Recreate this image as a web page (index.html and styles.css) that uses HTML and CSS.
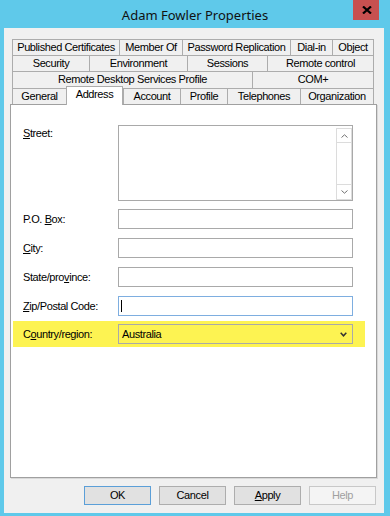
FILE: index.html
```html
<!DOCTYPE html>
<html>
<head>
<meta charset="utf-8">
<title>Adam Fowler Properties</title>
<link rel="stylesheet" href="styles.css">
</head>
<body>
<div class="window">
  <div class="titlebar">
    <div class="title">Adam Fowler Properties</div>
    <div class="close">
      <svg width="10" height="8" viewBox="0 0 10 8"><path d="M1 0.5 L9 7.5 M9 0.5 L1 7.5" stroke="#000" stroke-width="2.2" fill="none"/></svg>
    </div>
  </div>
  <div class="client">
    <div class="tabs">
      <div class="tabrow r1">
        <div class="tab">Published Certificates</div>
        <div class="tab">Member Of</div>
        <div class="tab">Password Replication</div>
        <div class="tab">Dial-in</div>
        <div class="tab">Object</div>
      </div>
      <div class="tabrow r2">
        <div class="tab">Security</div>
        <div class="tab">Environment</div>
        <div class="tab">Sessions</div>
        <div class="tab">Remote control</div>
      </div>
      <div class="tabrow r3">
        <div class="tab">Remote Desktop Services Profile</div>
        <div class="tab">COM+</div>
      </div>
      <div class="tabrow r4">
        <div class="tab">General</div>
        <div class="tab sel">Address</div>
        <div class="tab">Account</div>
        <div class="tab">Profile</div>
        <div class="tab">Telephones</div>
        <div class="tab">Organization</div>
      </div>
    </div>
    <div class="panel">
      <div class="field street">
        <label><u>S</u>treet:</label>
        <div class="textarea">
          <div class="vscroll">
            <div class="sb-btn up"><svg width="7" height="4" viewBox="0 0 7 4"><path d="M0.5 3.5 L3.5 0.8 L6.5 3.5" stroke="#707070" fill="none"/></svg></div>
            <div class="sb-btn down"><svg width="7" height="4" viewBox="0 0 7 4"><path d="M0.5 0.5 L3.5 3.2 L6.5 0.5" stroke="#707070" fill="none"/></svg></div>
          </div>
        </div>
      </div>
      <div class="field">
        <label>P.O. <u>B</u>ox:</label>
        <div class="input"></div>
      </div>
      <div class="field">
        <label><u>C</u>ity:</label>
        <div class="input"></div>
      </div>
      <div class="field">
        <label>State/pro<u>v</u>ince:</label>
        <div class="input"></div>
      </div>
      <div class="field">
        <label><u>Z</u>ip/Postal Code:</label>
        <div class="input focus"><div class="caret"></div></div>
      </div>
      <div class="field highlight">
        <label>C<u>o</u>untry/region:</label>
        <div class="combo">
          <span>Australia</span>
          <svg width="7" height="5" viewBox="0 0 7 5"><path d="M0.7 0.8 L3.5 3.8 L6.3 0.8" stroke="#333" stroke-width="1.5" fill="none"/></svg>
        </div>
      </div>
    </div>
    <div class="buttons">
      <button class="btn default">OK</button>
      <button class="btn">Cancel</button>
      <button class="btn"><u>A</u>pply</button>
      <button class="btn disabled">Help</button>
    </div>
  </div>
</div>
</body>
</html>
```
FILE: styles.css
```css
* { box-sizing: border-box; }
html, body { margin: 0; padding: 0; }
body {
  width: 390px;
  height: 516px;
  overflow: hidden;
  font-family: "Liberation Sans", Arial, sans-serif;
  font-size: 11px;
  letter-spacing: -0.4px;
  color: #000;
}
.window {
  width: 390px;
  height: 516px;
  background: #5fc9ea;
  display: flex;
  flex-direction: column;
}
.titlebar {
  height: 28px;
  flex: none;
  display: grid;
  grid-template-columns: 1fr auto 1fr;
  align-items: start;
}
.title {
  grid-column: 2;
  font-family: "Noto Sans", sans-serif;
  font-size: 13px;
  letter-spacing: 0;
  line-height: 18px;
  padding-top: 6px;
  color: #111;
}
.close {
  grid-column: 3;
  justify-self: end;
  margin-right: 11px;
  width: 26px;
  height: 20px;
  background: #c75050;
  display: flex;
  align-items: center;
  justify-content: center;
  padding-left: 2px;
}
.client {
  margin: 0 6px 0 4px;
  height: 485px;
  background: #f0f0f0;
  padding: 11px 0 0 6px;
}
.tabs {
  margin-left: 2px;
  width: 362px;
}
.tabrow {
  display: grid;
  height: 16px;
}
.tabrow.r1 { grid-template-columns: 107px 63px 108px 42px 42px; }
.tabrow.r2 { grid-template-columns: 77px 98px 80px 107px; }
.tabrow.r3 { grid-template-columns: 240px 122px; height: 17px; }
.tabrow.r4 { grid-template-columns: 54px 57px 57px 47px 73px 74px; }
.tab {
  border: 1px solid #acacac;
  border-bottom: 0;
  border-right: 0;
  background: #f0f0f0;
  text-align: center;
  line-height: 14px;
  white-space: nowrap;
}
.tabrow.r3 .tab { line-height: 15px; }
.tab:last-child { border-right: 1px solid #acacac; }
.tab.sel {
  background: #fff;
  position: relative;
  z-index: 1;
  margin: -2px 0 -1px 0;
  border-right: 1px solid #acacac;
  line-height: 15px;
}
.panel {
  width: 367px;
  height: 374px;
  background: #fff;
  border: 1px solid #a0a0a0;
  box-shadow: 1px 1px 0 #d9d9d9;
  padding: 20px 0 0 12px;
}
.field {
  display: flex;
  align-items: flex-start;
  margin-top: 8px;
}
.field:first-child { margin-top: 0; }
.field label {
  width: 95px;
  flex: none;
  line-height: 21px;
}
.field.street label { line-height: 17px; }
.input {
  width: 235px;
  height: 20px;
  border: 1px solid #a9a9a9;
  background: #fff;
}
.input.focus { border-color: #7eaee0; }
.caret {
  width: 1px;
  height: 12px;
  background: #000;
  margin: 3px 0 0 2px;
}
.textarea {
  width: 235px;
  height: 76px;
  border: 1px solid #a9a9a9;
  display: flex;
  justify-content: flex-end;
  padding-top: 2px;
}
.vscroll {
  width: 16px;
  height: 72px;
  border: 1px solid #dcdcdc;
  display: flex;
  flex-direction: column;
  justify-content: space-between;
}
.sb-btn {
  display: flex;
  align-items: center;
  justify-content: center;
}
.sb-btn.up { height: 14px; border-bottom: 1px solid #dcdcdc; }
.sb-btn.down { height: 15px; border-top: 1px solid #dcdcdc; }
.field.highlight {
  margin: 4px 0 0 -10px;
  padding: 3px 0 2px 10px;
  width: 352px;
  background: #fdf352;
}
.combo {
  width: 235px;
  height: 20px;
  border: 1px solid #a9a9a9;
  display: flex;
  align-items: center;
  justify-content: space-between;
  padding: 0 5px 0 3px;
}
.buttons {
  display: flex;
  justify-content: flex-end;
  gap: 8px;
  margin-top: 8px;
  padding-right: 8px;
}
.btn {
  width: 67px;
  height: 19px;
  border: 1px solid #adadad;
  background: #e1e1e1;
  font: inherit;
  letter-spacing: inherit;
  color: #000;
  padding: 0;
  line-height: 17px;
}
.btn.default { border-color: #5b9fd8; }
.btn.disabled {
  color: #a0a0a0;
  border-color: #c8c8c8;
  background: #f4f4f4;
}
```
